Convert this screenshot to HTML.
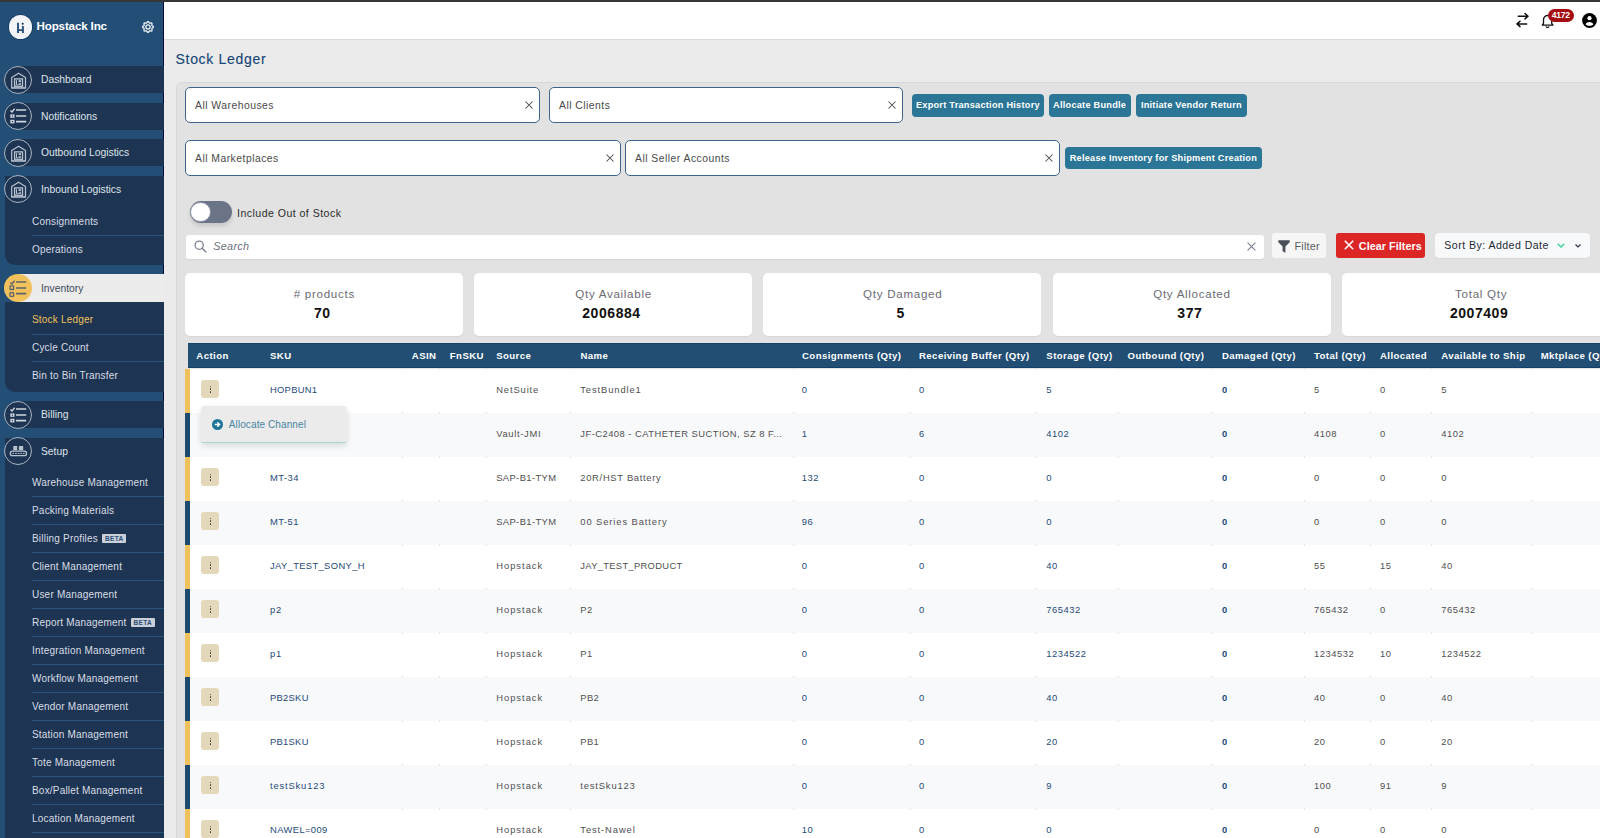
<!DOCTYPE html><html><head><meta charset="utf-8"><title>Stock Ledger</title><style>
*{box-sizing:border-box;margin:0;padding:0}
html,body{width:1600px;height:838px;overflow:hidden}
body{position:relative;background:#ebebeb;font-family:"Liberation Sans",sans-serif;color:#333}
.abs{position:absolute}
.t{position:absolute;white-space:nowrap;line-height:1}
#topbar{left:0;top:0;width:1600px;height:2px;background:#363636}
#sidebar{left:0;top:2px;width:164px;height:836px;background:#234f77;border-right:1px solid #060b33}
#header{left:164px;top:2px;width:1436px;height:38px;background:#fff;border-bottom:1px solid #dcdcdc}
.band{position:absolute;left:18px;width:146px;height:27px;background:#1d3452}
.grp{position:absolute;left:5px;width:159px;background:#1d3452;border-bottom-left-radius:10px}
.circ{position:absolute;left:4px;width:28px;height:28px;border-radius:50%;border:1px solid #aab4c1;background:#1d3452}
.navt{position:absolute;left:41px;font-size:10.3px;color:#dfe4ea;white-space:nowrap;line-height:1}
.subt{position:absolute;left:32px;font-size:10px;color:#d9dee6;white-space:nowrap;line-height:1;letter-spacing:.2px}
.div{position:absolute;left:32px;width:132px;height:1px;background:#29567e}
.beta{display:inline-block;vertical-align:1px;margin-left:4px;background:#c9d0da;color:#2b4d75;font-weight:bold;font-size:6.5px;padding:1.5px 3px 1px;border-radius:1px;letter-spacing:.3px}
#panel{left:176px;top:82px;width:1440px;height:780px;background:#e2e2e2;border:1px solid #d6d8dc;border-radius:6px}
.sel{position:absolute;height:36px;background:#fff;border:1.5px solid #3f6489;border-radius:5px}
.sel span{position:absolute;left:9px;top:13px;font-size:10.4px;color:#4a4a4a;line-height:1;white-space:nowrap;letter-spacing:.47px}
.sel svg{position:absolute;top:13px}
.btn{position:absolute;height:22.5px;background:#2b7596;border-radius:4px;color:#fff;font-weight:bold;font-size:9.2px;line-height:22.5px;text-align:center;white-space:nowrap;letter-spacing:.25px;text-indent:.25px}
.card{position:absolute;top:273px;width:278px;height:63px;background:#fff;border-radius:5px;box-shadow:0 1px 1px rgba(0,0,0,.05)}
.card .l{position:absolute;left:0;right:0;top:15.2px;text-align:center;font-size:11.6px;color:#6b6b73;line-height:1;letter-spacing:.7px;text-indent:.7px}
.card .v{position:absolute;left:0;right:0;top:33px;text-align:center;font-size:14px;font-weight:bold;color:#111;line-height:1;letter-spacing:.55px;text-indent:.55px}
#thead{left:188px;top:343px;width:1420px;height:25px;background:#224e74;border-top:1px solid #15436f;border-bottom:1px solid #123f6b}
.th{position:absolute;font-size:9.6px;font-weight:bold;color:#fff;line-height:1;white-space:nowrap;letter-spacing:.43px}
.row{position:absolute;left:185px;width:1420px;height:44px}
.row.y{border-left:5px solid #f1c15b}
.row.b{border-left:5px solid #1e4a72}
.td{position:absolute;top:16.8px;font-size:9.4px;color:#505050;line-height:1;white-space:nowrap}
.td.bl{color:#1f4b77}
.td.bb{color:#1f4b77;font-weight:bold}
.abtn{position:absolute;left:11px;top:11.6px;width:18px;height:18px;background:#e4d8bb;border-radius:3px}
.abtn i{position:absolute;left:8.5px;width:1.3px;height:1.3px;background:#3a3a3a;border-radius:50%}
</style></head><body>
<div id="topbar" class="abs"></div>
<div id="sidebar" class="abs">
<div class="abs" style="left:8.8px;top:13.3px;width:23.4px;height:23.4px;border-radius:50%;background:#f3f4f8;box-shadow:0 0 0 .8px #143a60"></div>
<svg class="abs" style="left:9px;top:13.5px" width="23" height="23" viewBox="0 0 23 23"><path d="M9 6.7V17.1M8.1 14.1H14.9M13.9 9.9V17.1" stroke="#26507a" stroke-width="1.9" fill="none"/><circle cx="13.7" cy="7.8" r="1" fill="#0d1f45"/></svg>
<div class="t" style="left:36.5px;top:18.2px;font-size:11.6px;font-weight:bold;color:#fff;letter-spacing:-.15px">Hopstack Inc</div>
<svg class="abs" style="left:136.3px;top:13.4px" width="24" height="24" viewBox="0 0 24 24"><path fill="none" stroke="#eef1f5" stroke-width="1.3" stroke-linejoin="round" d="M17.45 12.00 L17.35 12.35 L17.08 12.67 L16.71 12.94 L16.32 13.16 L16.01 13.36 L15.83 13.59 L15.80 13.87 L15.88 14.24 L15.99 14.67 L16.07 15.12 L16.03 15.54 L15.85 15.85 L15.54 16.03 L15.12 16.07 L14.67 15.99 L14.24 15.88 L13.87 15.80 L13.59 15.83 L13.36 16.01 L13.16 16.32 L12.94 16.71 L12.67 17.08 L12.35 17.35 L12.00 17.45 L11.65 17.35 L11.33 17.08 L11.06 16.71 L10.84 16.32 L10.64 16.01 L10.41 15.83 L10.13 15.80 L9.76 15.88 L9.33 15.99 L8.88 16.07 L8.46 16.03 L8.15 15.85 L7.97 15.54 L7.93 15.12 L8.01 14.67 L8.12 14.24 L8.20 13.87 L8.17 13.59 L7.99 13.36 L7.68 13.16 L7.29 12.94 L6.92 12.67 L6.65 12.35 L6.55 12.00 L6.65 11.65 L6.92 11.33 L7.29 11.06 L7.68 10.84 L7.99 10.64 L8.17 10.41 L8.20 10.13 L8.12 9.76 L8.01 9.33 L7.93 8.88 L7.97 8.46 L8.15 8.15 L8.46 7.97 L8.88 7.93 L9.33 8.01 L9.76 8.12 L10.13 8.20 L10.41 8.17 L10.64 7.99 L10.84 7.68 L11.06 7.29 L11.33 6.92 L11.65 6.65 L12.00 6.55 L12.35 6.65 L12.67 6.92 L12.94 7.29 L13.16 7.68 L13.36 7.99 L13.59 8.17 L13.87 8.20 L14.24 8.12 L14.67 8.01 L15.12 7.93 L15.54 7.97 L15.85 8.15 L16.03 8.46 L16.07 8.88 L15.99 9.33 L15.88 9.76 L15.80 10.13 L15.83 10.41 L16.01 10.64 L16.32 10.84 L16.71 11.06 L17.08 11.33 L17.35 11.65Z"/><circle cx="12" cy="12" r="2.1" fill="none" stroke="#eef1f5" stroke-width="1.3"/></svg>
<div class="band" style="top:64.1px"></div>
<div class="circ" style="top:63.849999999999994px"></div>
<svg class="abs" style="left:4px;top:63.599999999999994px" width="28" height="28" viewBox="0 0 28 28"><path d="M7.7 22V11.6L14.6 7.2l6.9 4.4V22z" fill="none" stroke="#b9c3cf" stroke-width="1.2" stroke-linejoin="round"/><path d="M7.2 21.9h14.8" stroke="#b9c3cf" stroke-width="1.2"/><rect x="10.6" y="12.9" width="7.9" height="7.4" fill="none" stroke="#b9c3cf" stroke-width="1.3"/><path d="M12.5 14.2v4.6h2" fill="none" stroke="#b9c3cf" stroke-width="1"/><rect x="14.6" y="14.2" width="2.4" height="1.9" fill="#b9c3cf"/><rect x="14.6" y="17.3" width="2.4" height="1.6" fill="#b9c3cf"/></svg>
<div class="navt" style="top:73.39999999999999px">Dashboard</div>
<div class="band" style="top:100.7px"></div>
<div class="circ" style="top:100.45px"></div>
<svg class="abs" style="left:4px;top:100.2px" width="28" height="28" viewBox="0 0 28 28"><path d="M6.4 8.4l1.6 1.6 2.6-3.2" fill="none" stroke="#d0d6de" stroke-width="1.4"/><rect x="6.3" y="12.4" width="4.2" height="3.4" fill="#d0d6de"/><rect x="6.3" y="17.8" width="4.2" height="3.6" fill="#d0d6de"/><circle cx="8.4" cy="14.1" r=".7" fill="#0d1f45"/><circle cx="8.4" cy="19.6" r=".7" fill="#0d1f45"/><path d="M12 8h10.2M12 14h10.2M12 19.6h10.2" stroke="#d0d6de" stroke-width="1.7"/></svg>
<div class="navt" style="top:110.0px">Notifications</div>
<div class="band" style="top:137.1px"></div>
<div class="circ" style="top:136.85px"></div>
<svg class="abs" style="left:4px;top:136.6px" width="28" height="28" viewBox="0 0 28 28"><path d="M7.7 22V11.6L14.6 7.2l6.9 4.4V22z" fill="none" stroke="#b9c3cf" stroke-width="1.2" stroke-linejoin="round"/><path d="M7.2 21.9h14.8" stroke="#b9c3cf" stroke-width="1.2"/><rect x="10.6" y="12.9" width="7.9" height="7.4" fill="none" stroke="#b9c3cf" stroke-width="1.3"/><path d="M12.5 14.2v4.6h2" fill="none" stroke="#b9c3cf" stroke-width="1"/><rect x="14.6" y="14.2" width="2.4" height="1.9" fill="#b9c3cf"/><rect x="14.6" y="17.3" width="2.4" height="1.6" fill="#b9c3cf"/></svg>
<div class="navt" style="top:146.4px">Outbound Logistics</div>
<div class="grp" style="top:174px;height:89px"></div>
<div class="circ" style="top:173.45px"></div>
<svg class="abs" style="left:4px;top:173.2px" width="28" height="28" viewBox="0 0 28 28"><path d="M7.7 22V11.6L14.6 7.2l6.9 4.4V22z" fill="none" stroke="#b9c3cf" stroke-width="1.2" stroke-linejoin="round"/><path d="M7.2 21.9h14.8" stroke="#b9c3cf" stroke-width="1.2"/><rect x="10.6" y="12.9" width="7.9" height="7.4" fill="none" stroke="#b9c3cf" stroke-width="1.3"/><path d="M12.5 14.2v4.6h2" fill="none" stroke="#b9c3cf" stroke-width="1"/><rect x="14.6" y="14.2" width="2.4" height="1.9" fill="#b9c3cf"/><rect x="14.6" y="17.3" width="2.4" height="1.6" fill="#b9c3cf"/></svg>
<div class="navt" style="top:183.0px">Inbound Logistics</div>
<div class="subt" style="top:215.0px">Consignments</div>
<div class="div" style="top:232.5px"></div>
<div class="subt" style="top:243.0px">Operations</div>
<div class="abs" style="left:18px;top:272px;width:146px;height:28px;background:#ececec"></div>
<div class="abs" style="left:4px;top:272px;width:28px;height:28px;border-radius:50%;background:#f1c15b"></div>
<svg class="abs" style="left:4px;top:272px" width="28" height="28" viewBox="0 0 28 28"><path d="M6.4 8.4l1.6 1.6 2.6-3.2" fill="none" stroke="#5f6470" stroke-width="1.4"/><rect x="6" y="11.9" width="3.6" height="3.6" rx=".6" fill="none" stroke="#5f6470" stroke-width="1.3"/><rect x="6" y="18.7" width="3.6" height="3.6" rx=".6" fill="none" stroke="#5f6470" stroke-width="1.3"/><path d="M12 8h10.2M12 14h10.2M12 19.6h10.2" stroke="#5f6470" stroke-width="1.7"/></svg>
<div class="navt" style="top:281.8px;color:#3c4a5c">Inventory</div>
<div class="grp" style="top:300px;height:89.5px"></div>
<div class="subt" style="top:313.3px;color:#f1c15b">Stock Ledger</div>
<div class="div" style="top:332px"></div>
<div class="subt" style="top:341.3px">Cycle Count</div>
<div class="div" style="top:359.3px"></div>
<div class="subt" style="top:369.0px">Bin to Bin Transfer</div>
<div class="band" style="top:399.1px"></div>
<div class="circ" style="top:398.85px"></div>
<svg class="abs" style="left:4px;top:398.6px" width="28" height="28" viewBox="0 0 28 28"><path d="M6.4 8.4l1.6 1.6 2.6-3.2" fill="none" stroke="#d0d6de" stroke-width="1.4"/><rect x="6.3" y="12.4" width="4.2" height="3.4" fill="#d0d6de"/><rect x="6.3" y="17.8" width="4.2" height="3.6" fill="#d0d6de"/><circle cx="8.4" cy="14.1" r=".7" fill="#0d1f45"/><circle cx="8.4" cy="19.6" r=".7" fill="#0d1f45"/><path d="M12 8h10.2M12 14h10.2M12 19.6h10.2" stroke="#d0d6de" stroke-width="1.7"/></svg>
<div class="navt" style="top:408.40000000000003px">Billing</div>
<div class="grp" style="top:435.6px;height:420px"></div>
<div class="circ" style="top:435.45px"></div>
<svg class="abs" style="left:4px;top:435.2px" width="28" height="28" viewBox="0 0 28 28"><rect x="9.3" y="9" width="3.9" height="4.3" rx=".5" fill="#b9c3cf"/><rect x="14.9" y="9" width="4.3" height="4.3" rx=".5" fill="#b9c3cf"/><rect x="6.3" y="14.2" width="16.2" height="4.4" rx="2.2" fill="none" stroke="#b9c3cf" stroke-width="1.3"/><path d="M8.5 16.4h12" stroke="#b9c3cf" stroke-width="1" stroke-dasharray="1.6 1"/></svg>
<div class="navt" style="top:445.0px">Setup</div>
<div class="subt" style="top:475.90000000000003px">Warehouse Management</div>
<div class="div" style="top:494.40000000000003px"></div>
<div class="subt" style="top:503.90000000000003px">Packing Materials</div>
<div class="div" style="top:522.4px"></div>
<div class="subt" style="top:531.9px">Billing Profiles<span class="beta">BETA</span></div>
<div class="div" style="top:550.4px"></div>
<div class="subt" style="top:559.9px">Client Management</div>
<div class="div" style="top:578.4px"></div>
<div class="subt" style="top:587.9px">User Management</div>
<div class="div" style="top:606.4px"></div>
<div class="subt" style="top:615.9px">Report Management<span class="beta">BETA</span></div>
<div class="div" style="top:634.4px"></div>
<div class="subt" style="top:643.9px">Integration Management</div>
<div class="div" style="top:662.4px"></div>
<div class="subt" style="top:671.9px">Workflow Management</div>
<div class="div" style="top:690.4px"></div>
<div class="subt" style="top:699.9px">Vendor Management</div>
<div class="div" style="top:718.4px"></div>
<div class="subt" style="top:727.9px">Station Management</div>
<div class="div" style="top:746.4px"></div>
<div class="subt" style="top:755.9px">Tote Management</div>
<div class="div" style="top:774.4px"></div>
<div class="subt" style="top:783.9px">Box/Pallet Management</div>
<div class="div" style="top:802.4px"></div>
<div class="subt" style="top:811.9px">Location Management</div>
<div class="div" style="top:830.4px"></div>
</div>
<div id="header" class="abs"></div>
<svg class="abs" style="left:1515px;top:12px" width="15" height="17" viewBox="0 0 15 17"><path d="M3.3 4.2h9.6M10 1.5l3 2.7-3 2.7M11.7 11.9H2.1M5 9.2L2 11.9l3 2.7" fill="none" stroke="#111" stroke-width="1.5" stroke-linecap="round" stroke-linejoin="round"/></svg>
<svg class="abs" style="left:1540px;top:12px" width="15" height="17" viewBox="0 0 15 17"><path d="M2.2 13.1h10.8l-1.3-1.6V8c0-2.5-1.7-4.4-4.1-4.7-2.4.3-4.1 2.2-4.1 4.7v3.5z" fill="none" stroke="#111" stroke-width="1.3" stroke-linejoin="round"/><path d="M6 14.3a1.6 1.6 0 0 0 3.1 0" fill="none" stroke="#111" stroke-width="1.2"/></svg>
<div class="abs" style="left:1548px;top:9px;width:25.5px;height:13px;border-radius:7px;background:#a40d12;color:#fff;font-size:8.6px;font-weight:bold;text-align:center;line-height:13px;letter-spacing:-.3px">4172</div>
<svg class="abs" style="left:1582px;top:13px" width="15" height="15" viewBox="0 0 15 15"><circle cx="7.5" cy="7.5" r="7.4" fill="#000"/><circle cx="7.5" cy="5.2" r="2.1" fill="#fff"/><path d="M3.6 11.2c.8-1.5 2.3-2.2 3.9-2.2s3.1.7 3.9 2.2c-1 1-2.4 1.6-3.9 1.6s-2.9-.6-3.9-1.6z" fill="#fff"/></svg>
<div class="t" style="left:175.5px;top:51.8px;font-size:14px;color:#154777;letter-spacing:.7px;-webkit-text-stroke:.15px #154777">Stock Ledger</div>
<div id="panel" class="abs"></div>
<div class="sel" style="left:185px;top:87px;width:355px"><span>All Warehouses</span></div>
<svg class="abs" style="left:524.5px;top:101.2px" width="8" height="8" viewBox="0 0 8 8"><path d="M.5.5l7 7M7.5.5l-7 7" stroke="#4a4a4a" stroke-width="1.05"/></svg>
<div class="sel" style="left:549px;top:87px;width:354px"><span>All Clients</span></div>
<svg class="abs" style="left:887.5px;top:101.2px" width="8" height="8" viewBox="0 0 8 8"><path d="M.5.5l7 7M7.5.5l-7 7" stroke="#4a4a4a" stroke-width="1.05"/></svg>
<div class="sel" style="left:185px;top:140px;width:436px"><span>All Marketplaces</span></div>
<svg class="abs" style="left:605.5px;top:154.2px" width="8" height="8" viewBox="0 0 8 8"><path d="M.5.5l7 7M7.5.5l-7 7" stroke="#4a4a4a" stroke-width="1.05"/></svg>
<div class="sel" style="left:625px;top:140px;width:435px"><span>All Seller Accounts</span></div>
<svg class="abs" style="left:1044.5px;top:154.2px" width="8" height="8" viewBox="0 0 8 8"><path d="M.5.5l7 7M7.5.5l-7 7" stroke="#4a4a4a" stroke-width="1.05"/></svg>
<div class="btn" style="left:912px;top:94.3px;width:131.5px">Export Transaction History</div>
<div class="btn" style="left:1048.5px;top:94.3px;width:82px">Allocate Bundle</div>
<div class="btn" style="left:1135.5px;top:94.3px;width:111.5px">Initiate Vendor Return</div>
<div class="btn" style="left:1065px;top:146.8px;width:196.5px">Release Inventory for Shipment Creation</div>
<div class="abs" style="left:190px;top:201.3px;width:42px;height:21.5px;border-radius:11px;background:#6b7386;box-shadow:0 3px 4px rgba(0,0,0,.12)"></div>
<div class="abs" style="left:190.2px;top:201.6px;width:20.6px;height:20.6px;border-radius:50%;background:#fff;border:1px solid #8a93a3"></div>
<div class="t" style="left:237px;top:207.5px;font-size:10.6px;color:#2b2b2b;letter-spacing:.45px">Include Out of Stock</div>
<div class="abs" style="left:186px;top:234.8px;width:1077.5px;height:24.7px;background:#fff;border-radius:3px;box-shadow:0 1px 1px rgba(0,0,0,.06)"></div>
<svg class="abs" style="left:193.6px;top:239.7px" width="13" height="13" viewBox="0 0 13 13"><circle cx="5.2" cy="5.2" r="4.1" fill="none" stroke="#7a8291" stroke-width="1.3"/><path d="M8.2 8.2l3.7 3.7" stroke="#7a8291" stroke-width="1.4" stroke-linecap="round"/></svg>
<div class="t" style="left:213.3px;top:241.3px;font-size:10.8px;font-style:italic;color:#6a707b;letter-spacing:.3px">Search</div>
<svg class="abs" style="left:1247.3px;top:242.2px" width="9" height="9" viewBox="0 0 8 8"><path d="M.5.5l7 7M7.5.5l-7 7" stroke="#7d8592" stroke-width="1.05"/></svg>
<div class="abs" style="left:1271.5px;top:233.3px;width:54px;height:24.7px;background:#f6f6f6;border-radius:3px"></div>
<svg class="abs" style="left:1278px;top:239.5px" width="12" height="13" viewBox="0 0 12 13"><path d="M0.3 .3h11.4v1.9L7.4 6.4v6.3L4.6 11.2V6.4L.3 2.2z" fill="#4a4f57"/></svg>
<div class="t" style="left:1294.5px;top:240.2px;font-size:10.8px;color:#585c63;letter-spacing:.2px;margin-top:.5px">Filter</div>
<div class="abs" style="left:1336px;top:233.3px;width:89px;height:24.7px;background:#dc2626;border-radius:3px"></div>
<svg class="abs" style="left:1343.5px;top:240.3px" width="10" height="10" viewBox="0 0 10 10"><path d="M.8.8l8.4 8.4M9.2.8L.8 9.2" stroke="#fff" stroke-width="1.6"/></svg>
<div class="t" style="left:1358.8px;top:240.2px;font-size:10.8px;font-weight:bold;color:#fff;letter-spacing:.05px;margin-top:.5px">Clear Filters</div>
<div class="abs" style="left:1435px;top:233.3px;width:154.8px;height:25px;background:#f8f9fa;border-radius:4px;box-shadow:0 1px 1px rgba(0,0,0,.05)"></div>
<div class="t" style="left:1444.3px;top:240.3px;font-size:10.6px;color:#1f2937;letter-spacing:.45px">Sort By: Added Date</div>
<svg class="abs" style="left:1556.8px;top:243.1px" width="8" height="5" viewBox="0 0 8 5"><path d="M.7.7L4 4l3.3-3.3" fill="none" stroke="#38d39b" stroke-width="1.35"/></svg>
<svg class="abs" style="left:1575px;top:244px" width="6" height="4" viewBox="0 0 6 4"><path d="M.5.5L3 3 5.5.5" fill="none" stroke="#2d3748" stroke-width="1.2"/></svg>
<div class="card" style="left:185.0px"><div class="l"># products</div><div class="v" style="left:-4px">70</div></div>
<div class="card" style="left:474.2px"><div class="l">Qty Available</div><div class="v" style="left:-4px">2006884</div></div>
<div class="card" style="left:763.4px"><div class="l">Qty Damaged</div><div class="v" style="left:-4px">5</div></div>
<div class="card" style="left:1052.6px"><div class="l">Qty Allocated</div><div class="v" style="left:-4px">377</div></div>
<div class="card" style="left:1341.8px"><div class="l">Total Qty</div><div class="v" style="left:-4px">2007409</div></div>
<div id="thead" class="abs"></div>
<div class="th" style="left:196.3px;top:350.5px">Action</div>
<div class="th" style="left:270px;top:350.5px">SKU</div>
<div class="th" style="left:411.8px;top:350.5px">ASIN</div>
<div class="th" style="left:449.8px;top:350.5px">FnSKU</div>
<div class="th" style="left:496.2px;top:350.5px">Source</div>
<div class="th" style="left:580.5px;top:350.5px">Name</div>
<div class="th" style="left:802px;top:350.5px">Consignments (Qty)</div>
<div class="th" style="left:919px;top:350.5px">Receiving Buffer (Qty)</div>
<div class="th" style="left:1046.3px;top:350.5px">Storage (Qty)</div>
<div class="th" style="left:1127.5px;top:350.5px">Outbound (Qty)</div>
<div class="th" style="left:1222px;top:350.5px">Damaged (Qty)</div>
<div class="th" style="left:1314px;top:350.5px">Total (Qty)</div>
<div class="th" style="left:1380px;top:350.5px">Allocated</div>
<div class="th" style="left:1441.3px;top:350.5px">Available to Ship</div>
<div class="th" style="left:1540.7px;top:350.5px">Mktplace (Qty)</div>
<div class="row y" style="top:368.5px;background:#ffffff">
<div class="abtn"><i style="top:5.6px"></i><i style="top:8.4px"></i><i style="top:11.2px"></i></div>
<div class="td bl" style="left:80.0px;letter-spacing:0.28px">HOPBUN1</div>
<div class="td " style="left:306.2px;letter-spacing:0.88px">NetSuite</div>
<div class="td " style="left:390.3px;letter-spacing:0.89px">TestBundle1</div>
<div class="td bl" style="left:611.8px;letter-spacing:0.53px">0</div>
<div class="td bl" style="left:729.0px;letter-spacing:0.53px">0</div>
<div class="td bl" style="left:856.3px;letter-spacing:0.53px">5</div>
<div class="td bb" style="left:1032.0px;letter-spacing:0.53px">0</div>
<div class="td " style="left:1124.0px;letter-spacing:0.53px">5</div>
<div class="td " style="left:1190.0px;letter-spacing:0.53px">0</div>
<div class="td " style="left:1251.3px;letter-spacing:0.53px">5</div>
</div>
<div class="row b" style="top:412.5px;background:#f8f9fb">
<div class="td " style="left:306.2px;letter-spacing:0.69px">Vault-JMI</div>
<div class="td " style="left:390.3px;letter-spacing:0.47px">JF-C2408 - CATHETER SUCTION, SZ 8 F...</div>
<div class="td bl" style="left:611.8px;letter-spacing:0.53px">1</div>
<div class="td bl" style="left:729.0px;letter-spacing:0.53px">6</div>
<div class="td bl" style="left:856.3px;letter-spacing:0.53px">4102</div>
<div class="td bb" style="left:1032.0px;letter-spacing:0.53px">0</div>
<div class="td " style="left:1124.0px;letter-spacing:0.53px">4108</div>
<div class="td " style="left:1190.0px;letter-spacing:0.53px">0</div>
<div class="td " style="left:1251.3px;letter-spacing:0.53px">4102</div>
</div>
<div class="row y" style="top:456.5px;background:#ffffff">
<div class="abtn"><i style="top:5.6px"></i><i style="top:8.4px"></i><i style="top:11.2px"></i></div>
<div class="td bl" style="left:80.0px;letter-spacing:0.47px">MT-34</div>
<div class="td " style="left:306.2px;letter-spacing:0.39px">SAP-B1-TYM</div>
<div class="td " style="left:390.3px;letter-spacing:0.70px">20R/HST Battery</div>
<div class="td bl" style="left:611.8px;letter-spacing:0.53px">132</div>
<div class="td bl" style="left:729.0px;letter-spacing:0.53px">0</div>
<div class="td bl" style="left:856.3px;letter-spacing:0.53px">0</div>
<div class="td bb" style="left:1032.0px;letter-spacing:0.53px">0</div>
<div class="td " style="left:1124.0px;letter-spacing:0.53px">0</div>
<div class="td " style="left:1190.0px;letter-spacing:0.53px">0</div>
<div class="td " style="left:1251.3px;letter-spacing:0.53px">0</div>
</div>
<div class="row b" style="top:500.5px;background:#f8f9fb">
<div class="abtn"><i style="top:5.6px"></i><i style="top:8.4px"></i><i style="top:11.2px"></i></div>
<div class="td bl" style="left:80.0px;letter-spacing:0.47px">MT-51</div>
<div class="td " style="left:306.2px;letter-spacing:0.39px">SAP-B1-TYM</div>
<div class="td " style="left:390.3px;letter-spacing:0.90px">00 Series Battery</div>
<div class="td bl" style="left:611.8px;letter-spacing:0.53px">96</div>
<div class="td bl" style="left:729.0px;letter-spacing:0.53px">0</div>
<div class="td bl" style="left:856.3px;letter-spacing:0.53px">0</div>
<div class="td bb" style="left:1032.0px;letter-spacing:0.53px">0</div>
<div class="td " style="left:1124.0px;letter-spacing:0.53px">0</div>
<div class="td " style="left:1190.0px;letter-spacing:0.53px">0</div>
<div class="td " style="left:1251.3px;letter-spacing:0.53px">0</div>
</div>
<div class="row y" style="top:544.5px;background:#ffffff">
<div class="abtn"><i style="top:5.6px"></i><i style="top:8.4px"></i><i style="top:11.2px"></i></div>
<div class="td bl" style="left:80.0px;letter-spacing:0.36px">JAY_TEST_SONY_H</div>
<div class="td " style="left:306.2px;letter-spacing:0.99px">Hopstack</div>
<div class="td " style="left:390.3px;letter-spacing:0.31px">JAY_TEST_PRODUCT</div>
<div class="td bl" style="left:611.8px;letter-spacing:0.53px">0</div>
<div class="td bl" style="left:729.0px;letter-spacing:0.53px">0</div>
<div class="td bl" style="left:856.3px;letter-spacing:0.53px">40</div>
<div class="td bb" style="left:1032.0px;letter-spacing:0.53px">0</div>
<div class="td " style="left:1124.0px;letter-spacing:0.53px">55</div>
<div class="td " style="left:1190.0px;letter-spacing:0.53px">15</div>
<div class="td " style="left:1251.3px;letter-spacing:0.53px">40</div>
</div>
<div class="row b" style="top:588.5px;background:#f8f9fb">
<div class="abtn"><i style="top:5.6px"></i><i style="top:8.4px"></i><i style="top:11.2px"></i></div>
<div class="td bl" style="left:80.0px;letter-spacing:0.81px">p2</div>
<div class="td " style="left:306.2px;letter-spacing:0.99px">Hopstack</div>
<div class="td " style="left:390.3px;letter-spacing:0.38px">P2</div>
<div class="td bl" style="left:611.8px;letter-spacing:0.53px">0</div>
<div class="td bl" style="left:729.0px;letter-spacing:0.53px">0</div>
<div class="td bl" style="left:856.3px;letter-spacing:0.53px">765432</div>
<div class="td bb" style="left:1032.0px;letter-spacing:0.53px">0</div>
<div class="td " style="left:1124.0px;letter-spacing:0.53px">765432</div>
<div class="td " style="left:1190.0px;letter-spacing:0.53px">0</div>
<div class="td " style="left:1251.3px;letter-spacing:0.53px">765432</div>
</div>
<div class="row y" style="top:632.5px;background:#ffffff">
<div class="abtn"><i style="top:5.6px"></i><i style="top:8.4px"></i><i style="top:11.2px"></i></div>
<div class="td bl" style="left:80.0px;letter-spacing:0.81px">p1</div>
<div class="td " style="left:306.2px;letter-spacing:0.99px">Hopstack</div>
<div class="td " style="left:390.3px;letter-spacing:0.38px">P1</div>
<div class="td bl" style="left:611.8px;letter-spacing:0.53px">0</div>
<div class="td bl" style="left:729.0px;letter-spacing:0.53px">0</div>
<div class="td bl" style="left:856.3px;letter-spacing:0.53px">1234522</div>
<div class="td bb" style="left:1032.0px;letter-spacing:0.53px">0</div>
<div class="td " style="left:1124.0px;letter-spacing:0.53px">1234532</div>
<div class="td " style="left:1190.0px;letter-spacing:0.53px">10</div>
<div class="td " style="left:1251.3px;letter-spacing:0.53px">1234522</div>
</div>
<div class="row b" style="top:676.5px;background:#f8f9fb">
<div class="abtn"><i style="top:5.6px"></i><i style="top:8.4px"></i><i style="top:11.2px"></i></div>
<div class="td bl" style="left:80.0px;letter-spacing:0.28px">PB2SKU</div>
<div class="td " style="left:306.2px;letter-spacing:0.99px">Hopstack</div>
<div class="td " style="left:390.3px;letter-spacing:0.33px">PB2</div>
<div class="td bl" style="left:611.8px;letter-spacing:0.53px">0</div>
<div class="td bl" style="left:729.0px;letter-spacing:0.53px">0</div>
<div class="td bl" style="left:856.3px;letter-spacing:0.53px">40</div>
<div class="td bb" style="left:1032.0px;letter-spacing:0.53px">0</div>
<div class="td " style="left:1124.0px;letter-spacing:0.53px">40</div>
<div class="td " style="left:1190.0px;letter-spacing:0.53px">0</div>
<div class="td " style="left:1251.3px;letter-spacing:0.53px">40</div>
</div>
<div class="row y" style="top:720.5px;background:#ffffff">
<div class="abtn"><i style="top:5.6px"></i><i style="top:8.4px"></i><i style="top:11.2px"></i></div>
<div class="td bl" style="left:80.0px;letter-spacing:0.28px">PB1SKU</div>
<div class="td " style="left:306.2px;letter-spacing:0.99px">Hopstack</div>
<div class="td " style="left:390.3px;letter-spacing:0.33px">PB1</div>
<div class="td bl" style="left:611.8px;letter-spacing:0.53px">0</div>
<div class="td bl" style="left:729.0px;letter-spacing:0.53px">0</div>
<div class="td bl" style="left:856.3px;letter-spacing:0.53px">20</div>
<div class="td bb" style="left:1032.0px;letter-spacing:0.53px">0</div>
<div class="td " style="left:1124.0px;letter-spacing:0.53px">20</div>
<div class="td " style="left:1190.0px;letter-spacing:0.53px">0</div>
<div class="td " style="left:1251.3px;letter-spacing:0.53px">20</div>
</div>
<div class="row b" style="top:764.5px;background:#f8f9fb">
<div class="abtn"><i style="top:5.6px"></i><i style="top:8.4px"></i><i style="top:11.2px"></i></div>
<div class="td bl" style="left:80.0px;letter-spacing:0.84px">testSku123</div>
<div class="td " style="left:306.2px;letter-spacing:0.99px">Hopstack</div>
<div class="td " style="left:390.3px;letter-spacing:0.84px">testSku123</div>
<div class="td bl" style="left:611.8px;letter-spacing:0.53px">0</div>
<div class="td bl" style="left:729.0px;letter-spacing:0.53px">0</div>
<div class="td bl" style="left:856.3px;letter-spacing:0.53px">9</div>
<div class="td bb" style="left:1032.0px;letter-spacing:0.53px">0</div>
<div class="td " style="left:1124.0px;letter-spacing:0.53px">100</div>
<div class="td " style="left:1190.0px;letter-spacing:0.53px">91</div>
<div class="td " style="left:1251.3px;letter-spacing:0.53px">9</div>
</div>
<div class="row y" style="top:808.5px;background:#ffffff">
<div class="abtn"><i style="top:5.6px"></i><i style="top:8.4px"></i><i style="top:11.2px"></i></div>
<div class="td bl" style="left:80.0px;letter-spacing:0.40px">NAWEL=009</div>
<div class="td " style="left:306.2px;letter-spacing:0.99px">Hopstack</div>
<div class="td " style="left:390.3px;letter-spacing:0.90px">Test-Nawel</div>
<div class="td bl" style="left:611.8px;letter-spacing:0.53px">10</div>
<div class="td bl" style="left:729.0px;letter-spacing:0.53px">0</div>
<div class="td bl" style="left:856.3px;letter-spacing:0.53px">0</div>
<div class="td bb" style="left:1032.0px;letter-spacing:0.53px">0</div>
<div class="td " style="left:1124.0px;letter-spacing:0.53px">0</div>
<div class="td " style="left:1190.0px;letter-spacing:0.53px">0</div>
<div class="td " style="left:1251.3px;letter-spacing:0.53px">0</div>
</div>
<div class="abs" style="left:401.9px;top:367.8px;width:1px;height:2.2px;background:#e3e4e6"></div>
<div class="abs" style="left:439.0px;top:367.8px;width:1px;height:2.2px;background:#e3e4e6"></div>
<div class="abs" style="left:485.7px;top:367.8px;width:1px;height:2.2px;background:#e3e4e6"></div>
<div class="abs" style="left:570.0px;top:367.8px;width:1px;height:2.2px;background:#e3e4e6"></div>
<div class="abs" style="left:792.6px;top:367.8px;width:1px;height:2.2px;background:#e3e4e6"></div>
<div class="abs" style="left:909.8px;top:367.8px;width:1px;height:2.2px;background:#e3e4e6"></div>
<div class="abs" style="left:1036.4px;top:367.8px;width:1px;height:2.2px;background:#e3e4e6"></div>
<div class="abs" style="left:1117.5px;top:367.8px;width:1px;height:2.2px;background:#e3e4e6"></div>
<div class="abs" style="left:1212.0px;top:367.8px;width:1px;height:2.2px;background:#e3e4e6"></div>
<div class="abs" style="left:1304.2px;top:367.8px;width:1px;height:2.2px;background:#e3e4e6"></div>
<div class="abs" style="left:1369.8px;top:367.8px;width:1px;height:2.2px;background:#e3e4e6"></div>
<div class="abs" style="left:1431.4px;top:367.8px;width:1px;height:2.2px;background:#e3e4e6"></div>
<div class="abs" style="left:1530.5px;top:367.8px;width:1px;height:2.2px;background:#e3e4e6"></div>
<div class="abs" style="left:401.9px;top:411.8px;width:1px;height:2.2px;background:#e3e4e6"></div>
<div class="abs" style="left:439.0px;top:411.8px;width:1px;height:2.2px;background:#e3e4e6"></div>
<div class="abs" style="left:485.7px;top:411.8px;width:1px;height:2.2px;background:#e3e4e6"></div>
<div class="abs" style="left:570.0px;top:411.8px;width:1px;height:2.2px;background:#e3e4e6"></div>
<div class="abs" style="left:792.6px;top:411.8px;width:1px;height:2.2px;background:#e3e4e6"></div>
<div class="abs" style="left:909.8px;top:411.8px;width:1px;height:2.2px;background:#e3e4e6"></div>
<div class="abs" style="left:1036.4px;top:411.8px;width:1px;height:2.2px;background:#e3e4e6"></div>
<div class="abs" style="left:1117.5px;top:411.8px;width:1px;height:2.2px;background:#e3e4e6"></div>
<div class="abs" style="left:1212.0px;top:411.8px;width:1px;height:2.2px;background:#e3e4e6"></div>
<div class="abs" style="left:1304.2px;top:411.8px;width:1px;height:2.2px;background:#e3e4e6"></div>
<div class="abs" style="left:1369.8px;top:411.8px;width:1px;height:2.2px;background:#e3e4e6"></div>
<div class="abs" style="left:1431.4px;top:411.8px;width:1px;height:2.2px;background:#e3e4e6"></div>
<div class="abs" style="left:1530.5px;top:411.8px;width:1px;height:2.2px;background:#e3e4e6"></div>
<div class="abs" style="left:401.9px;top:455.8px;width:1px;height:2.2px;background:#e3e4e6"></div>
<div class="abs" style="left:439.0px;top:455.8px;width:1px;height:2.2px;background:#e3e4e6"></div>
<div class="abs" style="left:485.7px;top:455.8px;width:1px;height:2.2px;background:#e3e4e6"></div>
<div class="abs" style="left:570.0px;top:455.8px;width:1px;height:2.2px;background:#e3e4e6"></div>
<div class="abs" style="left:792.6px;top:455.8px;width:1px;height:2.2px;background:#e3e4e6"></div>
<div class="abs" style="left:909.8px;top:455.8px;width:1px;height:2.2px;background:#e3e4e6"></div>
<div class="abs" style="left:1036.4px;top:455.8px;width:1px;height:2.2px;background:#e3e4e6"></div>
<div class="abs" style="left:1117.5px;top:455.8px;width:1px;height:2.2px;background:#e3e4e6"></div>
<div class="abs" style="left:1212.0px;top:455.8px;width:1px;height:2.2px;background:#e3e4e6"></div>
<div class="abs" style="left:1304.2px;top:455.8px;width:1px;height:2.2px;background:#e3e4e6"></div>
<div class="abs" style="left:1369.8px;top:455.8px;width:1px;height:2.2px;background:#e3e4e6"></div>
<div class="abs" style="left:1431.4px;top:455.8px;width:1px;height:2.2px;background:#e3e4e6"></div>
<div class="abs" style="left:1530.5px;top:455.8px;width:1px;height:2.2px;background:#e3e4e6"></div>
<div class="abs" style="left:401.9px;top:499.8px;width:1px;height:2.2px;background:#e3e4e6"></div>
<div class="abs" style="left:439.0px;top:499.8px;width:1px;height:2.2px;background:#e3e4e6"></div>
<div class="abs" style="left:485.7px;top:499.8px;width:1px;height:2.2px;background:#e3e4e6"></div>
<div class="abs" style="left:570.0px;top:499.8px;width:1px;height:2.2px;background:#e3e4e6"></div>
<div class="abs" style="left:792.6px;top:499.8px;width:1px;height:2.2px;background:#e3e4e6"></div>
<div class="abs" style="left:909.8px;top:499.8px;width:1px;height:2.2px;background:#e3e4e6"></div>
<div class="abs" style="left:1036.4px;top:499.8px;width:1px;height:2.2px;background:#e3e4e6"></div>
<div class="abs" style="left:1117.5px;top:499.8px;width:1px;height:2.2px;background:#e3e4e6"></div>
<div class="abs" style="left:1212.0px;top:499.8px;width:1px;height:2.2px;background:#e3e4e6"></div>
<div class="abs" style="left:1304.2px;top:499.8px;width:1px;height:2.2px;background:#e3e4e6"></div>
<div class="abs" style="left:1369.8px;top:499.8px;width:1px;height:2.2px;background:#e3e4e6"></div>
<div class="abs" style="left:1431.4px;top:499.8px;width:1px;height:2.2px;background:#e3e4e6"></div>
<div class="abs" style="left:1530.5px;top:499.8px;width:1px;height:2.2px;background:#e3e4e6"></div>
<div class="abs" style="left:401.9px;top:543.8px;width:1px;height:2.2px;background:#e3e4e6"></div>
<div class="abs" style="left:439.0px;top:543.8px;width:1px;height:2.2px;background:#e3e4e6"></div>
<div class="abs" style="left:485.7px;top:543.8px;width:1px;height:2.2px;background:#e3e4e6"></div>
<div class="abs" style="left:570.0px;top:543.8px;width:1px;height:2.2px;background:#e3e4e6"></div>
<div class="abs" style="left:792.6px;top:543.8px;width:1px;height:2.2px;background:#e3e4e6"></div>
<div class="abs" style="left:909.8px;top:543.8px;width:1px;height:2.2px;background:#e3e4e6"></div>
<div class="abs" style="left:1036.4px;top:543.8px;width:1px;height:2.2px;background:#e3e4e6"></div>
<div class="abs" style="left:1117.5px;top:543.8px;width:1px;height:2.2px;background:#e3e4e6"></div>
<div class="abs" style="left:1212.0px;top:543.8px;width:1px;height:2.2px;background:#e3e4e6"></div>
<div class="abs" style="left:1304.2px;top:543.8px;width:1px;height:2.2px;background:#e3e4e6"></div>
<div class="abs" style="left:1369.8px;top:543.8px;width:1px;height:2.2px;background:#e3e4e6"></div>
<div class="abs" style="left:1431.4px;top:543.8px;width:1px;height:2.2px;background:#e3e4e6"></div>
<div class="abs" style="left:1530.5px;top:543.8px;width:1px;height:2.2px;background:#e3e4e6"></div>
<div class="abs" style="left:401.9px;top:587.8px;width:1px;height:2.2px;background:#e3e4e6"></div>
<div class="abs" style="left:439.0px;top:587.8px;width:1px;height:2.2px;background:#e3e4e6"></div>
<div class="abs" style="left:485.7px;top:587.8px;width:1px;height:2.2px;background:#e3e4e6"></div>
<div class="abs" style="left:570.0px;top:587.8px;width:1px;height:2.2px;background:#e3e4e6"></div>
<div class="abs" style="left:792.6px;top:587.8px;width:1px;height:2.2px;background:#e3e4e6"></div>
<div class="abs" style="left:909.8px;top:587.8px;width:1px;height:2.2px;background:#e3e4e6"></div>
<div class="abs" style="left:1036.4px;top:587.8px;width:1px;height:2.2px;background:#e3e4e6"></div>
<div class="abs" style="left:1117.5px;top:587.8px;width:1px;height:2.2px;background:#e3e4e6"></div>
<div class="abs" style="left:1212.0px;top:587.8px;width:1px;height:2.2px;background:#e3e4e6"></div>
<div class="abs" style="left:1304.2px;top:587.8px;width:1px;height:2.2px;background:#e3e4e6"></div>
<div class="abs" style="left:1369.8px;top:587.8px;width:1px;height:2.2px;background:#e3e4e6"></div>
<div class="abs" style="left:1431.4px;top:587.8px;width:1px;height:2.2px;background:#e3e4e6"></div>
<div class="abs" style="left:1530.5px;top:587.8px;width:1px;height:2.2px;background:#e3e4e6"></div>
<div class="abs" style="left:401.9px;top:631.8px;width:1px;height:2.2px;background:#e3e4e6"></div>
<div class="abs" style="left:439.0px;top:631.8px;width:1px;height:2.2px;background:#e3e4e6"></div>
<div class="abs" style="left:485.7px;top:631.8px;width:1px;height:2.2px;background:#e3e4e6"></div>
<div class="abs" style="left:570.0px;top:631.8px;width:1px;height:2.2px;background:#e3e4e6"></div>
<div class="abs" style="left:792.6px;top:631.8px;width:1px;height:2.2px;background:#e3e4e6"></div>
<div class="abs" style="left:909.8px;top:631.8px;width:1px;height:2.2px;background:#e3e4e6"></div>
<div class="abs" style="left:1036.4px;top:631.8px;width:1px;height:2.2px;background:#e3e4e6"></div>
<div class="abs" style="left:1117.5px;top:631.8px;width:1px;height:2.2px;background:#e3e4e6"></div>
<div class="abs" style="left:1212.0px;top:631.8px;width:1px;height:2.2px;background:#e3e4e6"></div>
<div class="abs" style="left:1304.2px;top:631.8px;width:1px;height:2.2px;background:#e3e4e6"></div>
<div class="abs" style="left:1369.8px;top:631.8px;width:1px;height:2.2px;background:#e3e4e6"></div>
<div class="abs" style="left:1431.4px;top:631.8px;width:1px;height:2.2px;background:#e3e4e6"></div>
<div class="abs" style="left:1530.5px;top:631.8px;width:1px;height:2.2px;background:#e3e4e6"></div>
<div class="abs" style="left:401.9px;top:675.8px;width:1px;height:2.2px;background:#e3e4e6"></div>
<div class="abs" style="left:439.0px;top:675.8px;width:1px;height:2.2px;background:#e3e4e6"></div>
<div class="abs" style="left:485.7px;top:675.8px;width:1px;height:2.2px;background:#e3e4e6"></div>
<div class="abs" style="left:570.0px;top:675.8px;width:1px;height:2.2px;background:#e3e4e6"></div>
<div class="abs" style="left:792.6px;top:675.8px;width:1px;height:2.2px;background:#e3e4e6"></div>
<div class="abs" style="left:909.8px;top:675.8px;width:1px;height:2.2px;background:#e3e4e6"></div>
<div class="abs" style="left:1036.4px;top:675.8px;width:1px;height:2.2px;background:#e3e4e6"></div>
<div class="abs" style="left:1117.5px;top:675.8px;width:1px;height:2.2px;background:#e3e4e6"></div>
<div class="abs" style="left:1212.0px;top:675.8px;width:1px;height:2.2px;background:#e3e4e6"></div>
<div class="abs" style="left:1304.2px;top:675.8px;width:1px;height:2.2px;background:#e3e4e6"></div>
<div class="abs" style="left:1369.8px;top:675.8px;width:1px;height:2.2px;background:#e3e4e6"></div>
<div class="abs" style="left:1431.4px;top:675.8px;width:1px;height:2.2px;background:#e3e4e6"></div>
<div class="abs" style="left:1530.5px;top:675.8px;width:1px;height:2.2px;background:#e3e4e6"></div>
<div class="abs" style="left:401.9px;top:719.8px;width:1px;height:2.2px;background:#e3e4e6"></div>
<div class="abs" style="left:439.0px;top:719.8px;width:1px;height:2.2px;background:#e3e4e6"></div>
<div class="abs" style="left:485.7px;top:719.8px;width:1px;height:2.2px;background:#e3e4e6"></div>
<div class="abs" style="left:570.0px;top:719.8px;width:1px;height:2.2px;background:#e3e4e6"></div>
<div class="abs" style="left:792.6px;top:719.8px;width:1px;height:2.2px;background:#e3e4e6"></div>
<div class="abs" style="left:909.8px;top:719.8px;width:1px;height:2.2px;background:#e3e4e6"></div>
<div class="abs" style="left:1036.4px;top:719.8px;width:1px;height:2.2px;background:#e3e4e6"></div>
<div class="abs" style="left:1117.5px;top:719.8px;width:1px;height:2.2px;background:#e3e4e6"></div>
<div class="abs" style="left:1212.0px;top:719.8px;width:1px;height:2.2px;background:#e3e4e6"></div>
<div class="abs" style="left:1304.2px;top:719.8px;width:1px;height:2.2px;background:#e3e4e6"></div>
<div class="abs" style="left:1369.8px;top:719.8px;width:1px;height:2.2px;background:#e3e4e6"></div>
<div class="abs" style="left:1431.4px;top:719.8px;width:1px;height:2.2px;background:#e3e4e6"></div>
<div class="abs" style="left:1530.5px;top:719.8px;width:1px;height:2.2px;background:#e3e4e6"></div>
<div class="abs" style="left:401.9px;top:763.8px;width:1px;height:2.2px;background:#e3e4e6"></div>
<div class="abs" style="left:439.0px;top:763.8px;width:1px;height:2.2px;background:#e3e4e6"></div>
<div class="abs" style="left:485.7px;top:763.8px;width:1px;height:2.2px;background:#e3e4e6"></div>
<div class="abs" style="left:570.0px;top:763.8px;width:1px;height:2.2px;background:#e3e4e6"></div>
<div class="abs" style="left:792.6px;top:763.8px;width:1px;height:2.2px;background:#e3e4e6"></div>
<div class="abs" style="left:909.8px;top:763.8px;width:1px;height:2.2px;background:#e3e4e6"></div>
<div class="abs" style="left:1036.4px;top:763.8px;width:1px;height:2.2px;background:#e3e4e6"></div>
<div class="abs" style="left:1117.5px;top:763.8px;width:1px;height:2.2px;background:#e3e4e6"></div>
<div class="abs" style="left:1212.0px;top:763.8px;width:1px;height:2.2px;background:#e3e4e6"></div>
<div class="abs" style="left:1304.2px;top:763.8px;width:1px;height:2.2px;background:#e3e4e6"></div>
<div class="abs" style="left:1369.8px;top:763.8px;width:1px;height:2.2px;background:#e3e4e6"></div>
<div class="abs" style="left:1431.4px;top:763.8px;width:1px;height:2.2px;background:#e3e4e6"></div>
<div class="abs" style="left:1530.5px;top:763.8px;width:1px;height:2.2px;background:#e3e4e6"></div>
<div class="abs" style="left:401.9px;top:807.8px;width:1px;height:2.2px;background:#e3e4e6"></div>
<div class="abs" style="left:439.0px;top:807.8px;width:1px;height:2.2px;background:#e3e4e6"></div>
<div class="abs" style="left:485.7px;top:807.8px;width:1px;height:2.2px;background:#e3e4e6"></div>
<div class="abs" style="left:570.0px;top:807.8px;width:1px;height:2.2px;background:#e3e4e6"></div>
<div class="abs" style="left:792.6px;top:807.8px;width:1px;height:2.2px;background:#e3e4e6"></div>
<div class="abs" style="left:909.8px;top:807.8px;width:1px;height:2.2px;background:#e3e4e6"></div>
<div class="abs" style="left:1036.4px;top:807.8px;width:1px;height:2.2px;background:#e3e4e6"></div>
<div class="abs" style="left:1117.5px;top:807.8px;width:1px;height:2.2px;background:#e3e4e6"></div>
<div class="abs" style="left:1212.0px;top:807.8px;width:1px;height:2.2px;background:#e3e4e6"></div>
<div class="abs" style="left:1304.2px;top:807.8px;width:1px;height:2.2px;background:#e3e4e6"></div>
<div class="abs" style="left:1369.8px;top:807.8px;width:1px;height:2.2px;background:#e3e4e6"></div>
<div class="abs" style="left:1431.4px;top:807.8px;width:1px;height:2.2px;background:#e3e4e6"></div>
<div class="abs" style="left:1530.5px;top:807.8px;width:1px;height:2.2px;background:#e3e4e6"></div>
<div class="abs" style="left:401.9px;top:851.8px;width:1px;height:2.2px;background:#e3e4e6"></div>
<div class="abs" style="left:439.0px;top:851.8px;width:1px;height:2.2px;background:#e3e4e6"></div>
<div class="abs" style="left:485.7px;top:851.8px;width:1px;height:2.2px;background:#e3e4e6"></div>
<div class="abs" style="left:570.0px;top:851.8px;width:1px;height:2.2px;background:#e3e4e6"></div>
<div class="abs" style="left:792.6px;top:851.8px;width:1px;height:2.2px;background:#e3e4e6"></div>
<div class="abs" style="left:909.8px;top:851.8px;width:1px;height:2.2px;background:#e3e4e6"></div>
<div class="abs" style="left:1036.4px;top:851.8px;width:1px;height:2.2px;background:#e3e4e6"></div>
<div class="abs" style="left:1117.5px;top:851.8px;width:1px;height:2.2px;background:#e3e4e6"></div>
<div class="abs" style="left:1212.0px;top:851.8px;width:1px;height:2.2px;background:#e3e4e6"></div>
<div class="abs" style="left:1304.2px;top:851.8px;width:1px;height:2.2px;background:#e3e4e6"></div>
<div class="abs" style="left:1369.8px;top:851.8px;width:1px;height:2.2px;background:#e3e4e6"></div>
<div class="abs" style="left:1431.4px;top:851.8px;width:1px;height:2.2px;background:#e3e4e6"></div>
<div class="abs" style="left:1530.5px;top:851.8px;width:1px;height:2.2px;background:#e3e4e6"></div>
<div class="abs" style="left:201px;top:406.2px;width:146.2px;height:36.6px;background:#ebebeb;border-radius:3px;border-bottom:1.5px solid #a3d3d8;box-shadow:0 3px 6px rgba(0,0,0,.12)"></div>
<svg class="abs" style="left:211.6px;top:418.5px" width="11" height="11" viewBox="0 0 11 11"><circle cx="5.5" cy="5.5" r="5.5" fill="#1f7598"/><path d="M2.8 5.5h4.6M5.4 3.3l2.2 2.2-2.2 2.2" fill="none" stroke="#fff" stroke-width="1.3"/></svg>
<div class="t" style="left:228.8px;top:419.5px;font-size:10px;color:#4a84a0;letter-spacing:.1px">Allocate Channel</div>
</body></html>
